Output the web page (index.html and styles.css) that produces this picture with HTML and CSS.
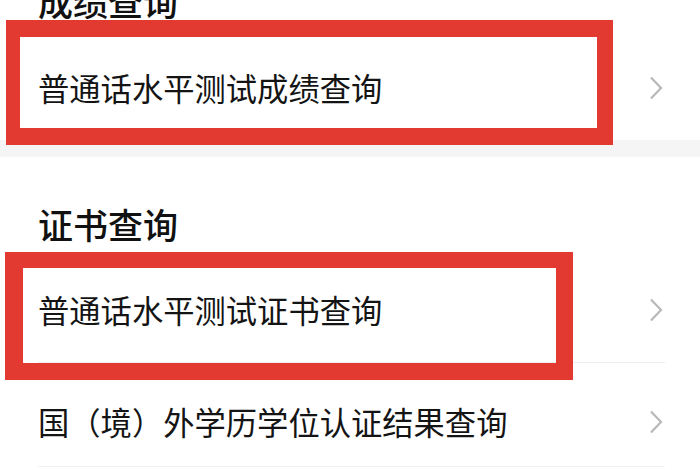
FILE: index.html
```html
<!DOCTYPE html>
<html lang="zh-CN">
<head>
<meta charset="utf-8">
<title>查询</title>
<link rel="stylesheet" href="styles.css">
</head>
<body>
<div class="page">
  <section class="section section-first">
    <h2 class="section-title title-first">成绩查询</h2>
    <div class="row row-first">
      <span class="row-text">普通话水平测试成绩查询</span>
      <svg class="chevron" width="14" height="24" viewBox="0 0 14 24"><polyline points="2,1.5 12,12 2,22.5" fill="none" stroke="#b8b8b8" stroke-width="2.2" stroke-linejoin="miter"/></svg>
      <div class="highlight highlight-one"></div>
    </div>
  </section>
  <div class="band"></div>
  <section class="section">
    <h2 class="section-title title-second">证书查询</h2>
    <div class="row row-second">
      <span class="row-text">普通话水平测试证书查询</span>
      <svg class="chevron" width="14" height="24" viewBox="0 0 14 24"><polyline points="2,1.5 12,12 2,22.5" fill="none" stroke="#b8b8b8" stroke-width="2.2" stroke-linejoin="miter"/></svg>
      <div class="highlight highlight-two"></div>
    </div>
    <div class="row row-third">
      <span class="row-text">国（境）外学历学位认证结果查询</span>
      <svg class="chevron" width="14" height="24" viewBox="0 0 14 24"><polyline points="2,1.5 12,12 2,22.5" fill="none" stroke="#b8b8b8" stroke-width="2.2" stroke-linejoin="miter"/></svg>
    </div>
  </section>
</div>
</body>
</html>
```

FILE: styles.css
```css
html, body {
  margin: 0;
  padding: 0;
  background: #ffffff;
}

body {
  font-family: "Noto Sans CJK SC", "Noto Sans", sans-serif;
  color: #111111;
  width: 700px;
  height: 470px;
  overflow: hidden;
}

.page {
  display: flex;
  flex-direction: column;
}

.section {
  display: flex;
  flex-direction: column;
  background: #ffffff;
}

.section-title {
  margin: 0;
  padding-left: 38px;
  font-size: 35px;
  line-height: 35px;
  height: 35px;
  font-weight: 500;
  color: #111111;
}

.title-first {
  margin-top: -17px;
}

.title-second {
  margin-top: 49px;
}

.band {
  height: 17px;
  background: #f5f5f6;
}

.row {
  position: relative;
  display: flex;
  align-items: center;
  justify-content: space-between;
  margin-left: 38px;
  margin-right: 35px;
  padding-right: 2px;
  box-sizing: border-box;
}

.row-text {
  font-size: 31.3px;
  line-height: 1;
  letter-spacing: 0;
  color: #141414;
}

.chevron {
  display: block;
  flex: none;
}

.row-first {
  margin-top: 18px;
  height: 104px;
}

.row-second {
  margin-top: 16px;
  height: 106px;
  border-bottom: 1px solid #ececec;
}

.row-third {
  height: 104px;
  padding-top: 14px;
  border-bottom: 1px solid #f2f2f2;
}

.highlight {
  position: absolute;
  box-sizing: border-box;
  border: 16px solid #e23a31;
  pointer-events: none;
}

.highlight-one {
  left: -32px;
  top: -16px;
  width: 607px;
  height: 125px;
  border-width: 17px 16px 17px 14px;
}

.highlight-two {
  left: -33px;
  top: -5px;
  width: 568px;
  height: 128px;
  border-width: 16px 17px 17px 18px;
}
```
